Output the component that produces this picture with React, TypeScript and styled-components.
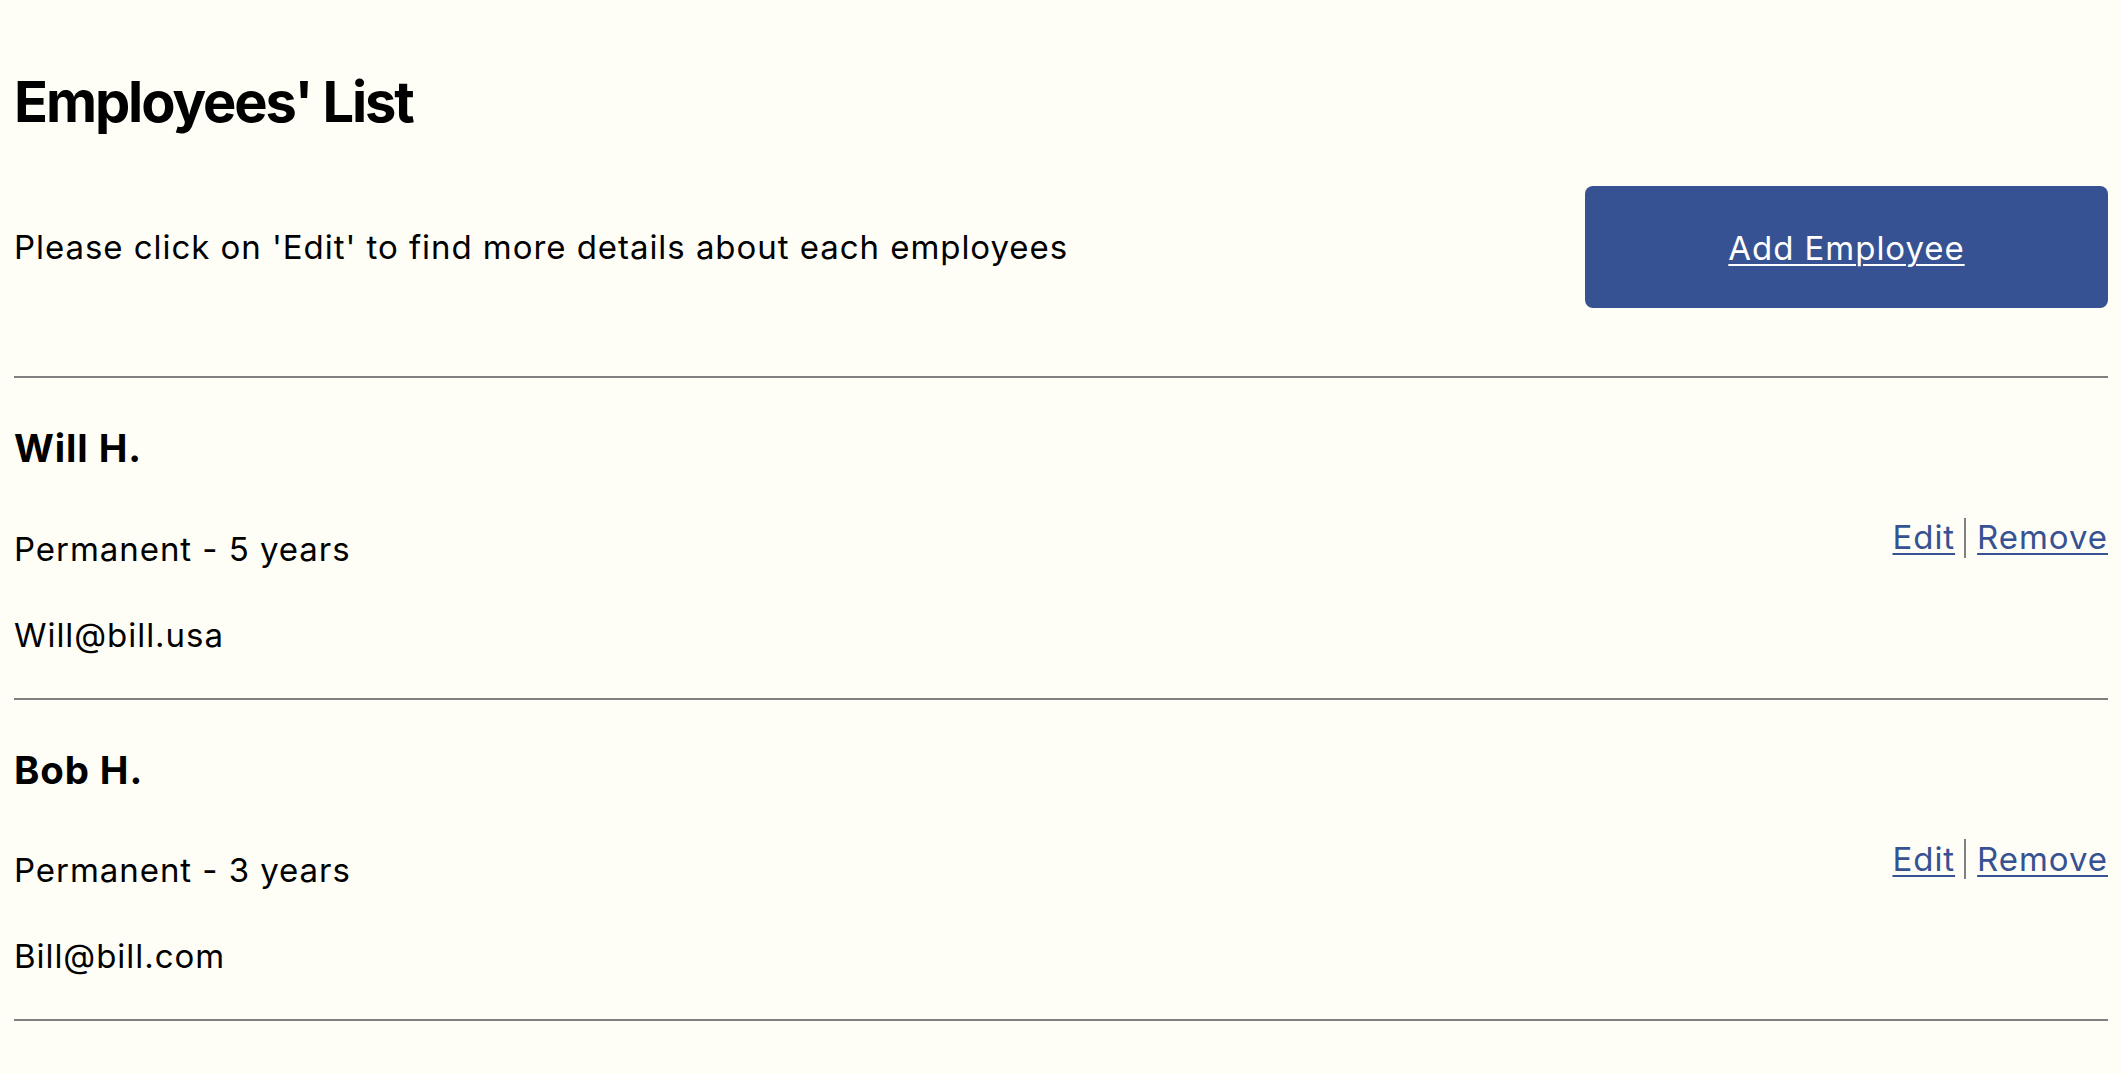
import React from "react";
import styled, { createGlobalStyle } from "styled-components";

const GlobalStyle = createGlobalStyle`
  html, body {
    margin: 0;
    padding: 0;
    background: #fffef6;
  }
  body {
    font-family: Inter, "Noto Sans", sans-serif;
    color: #000;
  }
`;

const Page = styled.main`
  padding: 68px 14px 40px;
  min-height: 100vh;
  box-sizing: border-box;
  background: #fffef6;
`;

const Title = styled.h1`
  margin: 0;
  font-size: 56px;
  line-height: 68px;
  font-weight: 700;
  letter-spacing: -2.1px;
`;

const IntroRow = styled.section`
  display: flex;
  align-items: center;
  justify-content: space-between;
  margin-top: 50px;
  padding-bottom: 68px;
  border-bottom: 2px solid #808080;
`;

const Text = styled.p`
  margin: 0;
  font-size: 33px;
  line-height: 39px;
  letter-spacing: 0.95px;
`;

const AddButton = styled.a`
  display: flex;
  align-items: center;
  justify-content: center;
  width: 523px;
  height: 122px;
  padding-top: 2px;
  box-sizing: border-box;
  border-radius: 8px;
  background: #375292;
  color: #ffffff;
  font-size: 33px;
  letter-spacing: 0.95px;
  text-decoration: underline;
  text-underline-offset: 4px;
  text-decoration-thickness: 2px;
  cursor: pointer;
`;

const Item = styled.article`
  display: flex;
  align-items: center;
  justify-content: space-between;
  border-bottom: 2px solid #808080;
`;

const Info = styled.div`
  display: flex;
  flex-direction: column;
  padding: 47px 0 43px;
`;

const Name = styled.h2`
  margin: 0 0 58px;
  font-size: 38.4px;
  line-height: 46.5px;
  font-weight: 700;
  letter-spacing: 0.9px;
`;

const Detail = styled(Text)<{ $last?: boolean }>`
  margin-bottom: ${(p) => (p.$last ? "0" : "47px")};
`;

const Actions = styled.div`
  display: flex;
  align-items: center;
`;

const ActionLink = styled.a`
  color: #375292;
  font-size: 33px;
  line-height: 39px;
  letter-spacing: 0.95px;
  text-decoration: underline;
  text-underline-offset: 4px;
  text-decoration-thickness: 2px;
  cursor: pointer;
`;

const Divider = styled.span`
  display: inline-block;
  width: 2px;
  height: 40px;
  background: #808080;
  margin: 0 11px 0 9px;
`;

const employees = [
  { name: "Will H.", detail: "Permanent - 5 years", email: "Will@bill.usa" },
  { name: "Bob H.", detail: "Permanent - 3 years", email: "Bill@bill.com" },
];

export default function App() {
  return (
    <>
      <GlobalStyle />
      <Page>
        <Title>Employees' List</Title>
        <IntroRow>
          <Text>Please click on 'Edit' to find more details about each employees</Text>
          <AddButton>Add Employee</AddButton>
        </IntroRow>
        {employees.map((e) => (
          <Item key={e.name}>
            <Info>
              <Name>{e.name}</Name>
              <Detail>{e.detail}</Detail>
              <Detail $last>{e.email}</Detail>
            </Info>
            <Actions>
              <ActionLink>Edit</ActionLink>
              <Divider />
              <ActionLink>Remove</ActionLink>
            </Actions>
          </Item>
        ))}
      </Page>
    </>
  );
}
